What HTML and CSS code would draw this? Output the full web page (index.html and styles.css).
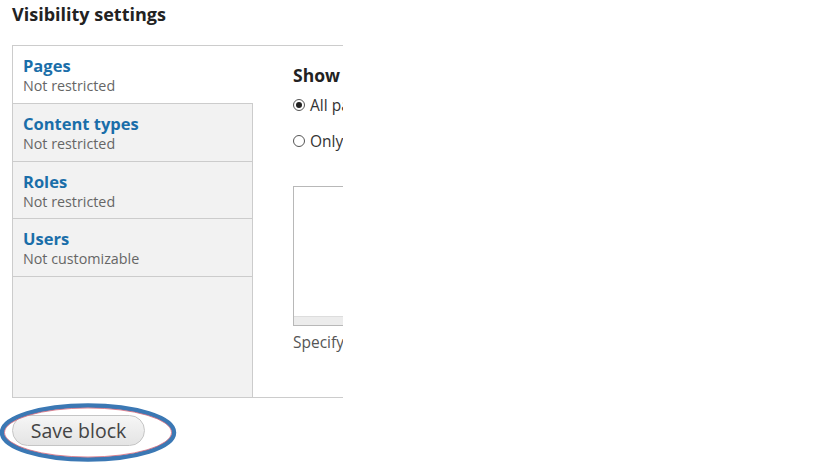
FILE: index.html
```html
<!DOCTYPE html>
<html>
<head>
<meta charset="utf-8">
<link rel="stylesheet" href="styles.css">
</head>
<body>
<div class="page">
  <h2 class="title">Visibility settings</h2>
  <div class="clip">
    <div class="vtabs">
      <ul class="tabs">
        <li class="tab active"><a class="tab-name">Pages</a><span class="tab-sum">Not restricted</span></li>
        <li class="tab"><a class="tab-name">Content types</a><span class="tab-sum">Not restricted</span></li>
        <li class="tab"><a class="tab-name">Roles</a><span class="tab-sum">Not restricted</span></li>
        <li class="tab"><a class="tab-name">Users</a><span class="tab-sum">Not customizable</span></li>
      </ul>
      <div class="pane">
        <div class="label">Show block on specific pages</div>
        <label class="radio"><span class="dot checked"></span>All pages except those listed</label>
        <label class="radio"><span class="dot"></span>Only the listed pages</label>
        <div class="textarea"><div class="grip"></div></div>
        <div class="desc">Specify pages by using their paths.</div>
      </div>
    </div>
  </div>
  <div class="actions">
    <button class="btn">Save block</button>
    <svg class="circle" width="180" height="62" viewBox="0 0 180 62">
      <ellipse cx="88" cy="30.5" rx="86" ry="27" fill="none" stroke="#3b78b4" stroke-width="4.5"/>
      <ellipse cx="88" cy="30.5" rx="83.5" ry="24.5" fill="none" stroke="#d86a7a" stroke-width="0.8"/>
    </svg>
  </div>
</div>
</body>
</html>
```
FILE: styles.css
```css
* { box-sizing: border-box; }
body {
  margin: 0;
  background: #fff;
  font-family: "Open Sans", "DejaVu Sans", sans-serif;
  color: #333;
}
.page {
  padding: 0 0 0 12px;
  width: 818px;
  height: 468px;
  overflow: hidden;
}
.title {
  margin: 0;
  padding-top: 2px;
  height: 45px;
  font-size: 18px;
  font-weight: bold;
  color: #222;
  line-height: 24px;
}
.clip {
  width: 331px;
  overflow: hidden;
}
.vtabs {
  display: flex;
  width: 600px;
  height: 353px;
  border: 1px solid #ccc;
  border-right: none;
}
.tabs {
  list-style: none;
  margin: 0;
  padding: 0;
  width: 240px;
  flex: none;
  background: #f2f2f2;
  border-right: 1px solid #ccc;
}
.tab {
  display: flex;
  flex-direction: column;
  height: 57px;
  padding: 10px 10px 0;
  border-bottom: 1px solid #ccc;
  line-height: 20px;
}
.tab:nth-child(1), .tab:nth-child(2), .tab:nth-child(4) { height: 58px; }
.tab.active {
  background: #fff;
  margin-right: -1px;
}
.tab-name {
  font-size: 16.5px;
  font-weight: bold;
  color: #1a6ea9;
}
.tab-sum {
  font-size: 14.3px;
  color: #666;
}
.pane {
  padding: 17px 0 0 40px;
  flex: 1;
}
.label {
  font-size: 17.5px;
  font-weight: bold;
  color: #222;
  line-height: 24px;
  white-space: nowrap;
}
.radio {
  display: flex;
  align-items: center;
  font-size: 15.5px;
  color: #333;
  line-height: 20px;
  white-space: nowrap;
  margin-top: 8px;
}
.radio + .radio { margin-top: 16px; }
.dot {
  width: 12px;
  height: 12px;
  border: 1px solid #555;
  border-radius: 50%;
  margin-right: 5px;
  position: relative;
  flex: none;
}
.dot.checked::after {
  content: "";
  position: absolute;
  left: 2px;
  top: 2px;
  width: 6px;
  height: 6px;
  border-radius: 50%;
  background: #222;
}
.textarea {
  margin-top: 35px;
  width: 400px;
  height: 140px;
  border: 1px solid #b8b8b8;
  display: flex;
  flex-direction: column;
  justify-content: flex-end;
}
.grip {
  height: 9px;
  background: #ececec;
  border-top: 1px solid #ddd;
}
.desc {
  margin-top: 6px;
  font-size: 15.5px;
  color: #555;
  line-height: 20px;
  white-space: nowrap;
}
.actions {
  position: relative;
  margin-top: 17px;
  margin-left: -12px;
  padding-left: 12px;
  height: 60px;
}
.btn {
  display: block;
  margin-top: 1px;
  width: 133px;
  height: 31px;
  border: 1px solid #c5c5c5;
  border-radius: 16px;
  background: linear-gradient(#f6f6f6, #e4e4e4);
  font-family: "Open Sans", "DejaVu Sans", sans-serif;
  font-size: 19.5px;
  color: #444;
  padding: 0;
}
.circle {
  position: absolute;
  left: 0;
  top: -13px;
}
```
